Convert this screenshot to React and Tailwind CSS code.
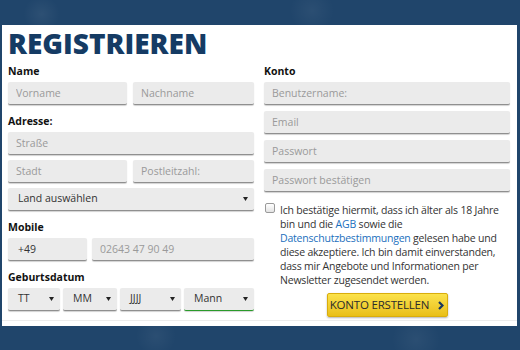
const font = { fontFamily: '"Open Sans", "Noto Sans", sans-serif' }

function Field({ placeholder, value, className = '' }) {
  return (
    <input
      readOnly
      placeholder={placeholder}
      defaultValue={value}
      className={`h-[23px] min-w-0 rounded-[2px] border-b border-[#8f8f8f] bg-[#ebebeb] pl-[8px] text-[10.5px] text-[#333] shadow-[0_1px_1px_rgba(0,0,0,0.18)] outline-none placeholder:text-[#9a9a9a] ${className}`}
    />
  )
}

function Arrow() {
  return (
    <svg width="5" height="4" viewBox="0 0 5 4" className="shrink-0">
      <path d="M0 0h5L2.5 4z" fill="#222" />
    </svg>
  )
}

function Select({ label, className = '', border = 'border-[#8f8f8f]' }) {
  return (
    <div
      className={`flex h-[23px] items-center justify-between rounded-[2px] border-b bg-[#ebebeb] pl-[10px] pr-[6px] text-[10.5px] text-[#333] shadow-[0_1px_1px_rgba(0,0,0,0.18)] ${border} ${className}`}
    >
      <span>{label}</span>
      <Arrow />
    </div>
  )
}

function Label({ children, className = '' }) {
  return <div className={`mb-[4px] h-[14px] text-[10.5px] font-bold leading-[14px] text-[#111] ${className}`}>{children}</div>
}

export default function App() {
  return (
    <div
      style={font}
      className="h-[350px] w-[520px] overflow-hidden bg-[#20456b] bg-[radial-gradient(circle_at_8%_4%,rgba(255,255,255,0.06)_0,transparent_18px),radial-gradient(circle_at_60%_3%,rgba(255,255,255,0.05)_0,transparent_22px),radial-gradient(circle_at_30%_96%,rgba(255,255,255,0.05)_0,transparent_20px),radial-gradient(circle_at_80%_97%,rgba(255,255,255,0.05)_0,transparent_24px)] px-[2px] pt-[25px]"
    >
      <div className="flex h-[301px] w-[515px] flex-col bg-white pt-[3px]">
        <h1 className="pl-[6px] text-[28px] font-extrabold leading-[30px] text-[#153b64]">REGISTRIEREN</h1>

        <div className="mt-[6px] flex gap-[10px] pl-[6px] pr-[5px]">
          {/* linke Spalte */}
          <div className="flex w-[246px] flex-col">
            <Label>Name</Label>
            <div className="flex gap-[6px]">
              <Field placeholder="Vorname" className="w-[119px]" />
              <Field placeholder="Nachname" className="flex-1" />
            </div>

            <Label className="mt-[9px]">Adresse:</Label>
            <div className="flex flex-col gap-[5px]">
              <Field placeholder="Straße" />
              <div className="flex gap-[6px]">
                <Field placeholder="Stadt" className="w-[119px]" />
                <Field placeholder="Postleitzahl:" className="flex-1" />
              </div>
              <Select label="Land auswählen" />
            </div>

            <Label className="mt-[9px]">Mobile</Label>
            <div className="flex gap-[5px]">
              <Field value="+49" className="w-[79px] pl-[10px]" />
              <Field placeholder="02643 47 90 49" className="flex-1" />
            </div>

            <Label className="mt-[9px]">Geburtsdatum</Label>
            <div className="flex gap-[3px]">
              <Select label="TT" className="w-[52px]" />
              <Select label="MM" className="w-[54px]" />
              <Select label="JJJJ" className="w-[61px]" />
              <Select label="Mann" className="flex-1" border="border-[#2a9a2a]" />
            </div>
          </div>

          {/* rechte Spalte */}
          <div className="flex w-[246px] flex-col">
            <Label>Konto</Label>
            <div className="flex flex-col gap-[6px]">
              <Field placeholder="Benutzername:" />
              <Field placeholder="Email" />
              <Field placeholder="Passwort" />
              <Field placeholder="Passwort bestätigen" />
            </div>

            <div className="mt-[11px] flex gap-[5px]">
              <span className="ml-[1px] h-[10px] w-[10px] shrink-0 rounded-[2px] border border-[#9a9a9a] bg-gradient-to-b from-white to-[#e3e3e3]" />
              <p className="text-[10.5px] leading-[14px] tracking-[-0.2px] text-[#333]">
                Ich bestätige hiermit, dass ich älter als 18 Jahre
                <br />
                bin und die <span className="text-[#1b6fbd]">AGB</span> sowie die
                <br />
                <span className="text-[#1b6fbd]">Datenschutzbestimmungen</span> gelesen habe und
                <br />
                diese akzeptiere. Ich bin damit einverstanden,
                <br />
                dass mir Angebote und Informationen per
                <br />
                Newsletter zugesendet werden.
              </p>
            </div>

            <div className="mt-[6px] flex justify-center">
              <button
                type="button"
                className="flex h-[24px] w-[121px] items-center justify-center gap-[9px] rounded-[2px] border border-[#d9ad0c] bg-gradient-to-b from-[#fbe24a] to-[#e9bf14] text-[11.5px] font-medium tracking-[-0.2px] text-[#2b2b2b] shadow-[0_1px_2px_rgba(0,0,0,0.3)]"
              >
                KONTO ERSTELLEN
                <svg width="6" height="9" viewBox="0 0 6 9">
                  <path d="M1 1l3.5 3.5L1 8" fill="none" stroke="#16355e" strokeWidth="2.2" />
                </svg>
              </button>
            </div>
          </div>
        </div>

        <div className="mt-auto h-[6px] border-t border-[#ececec]" />
      </div>
    </div>
  )
}
